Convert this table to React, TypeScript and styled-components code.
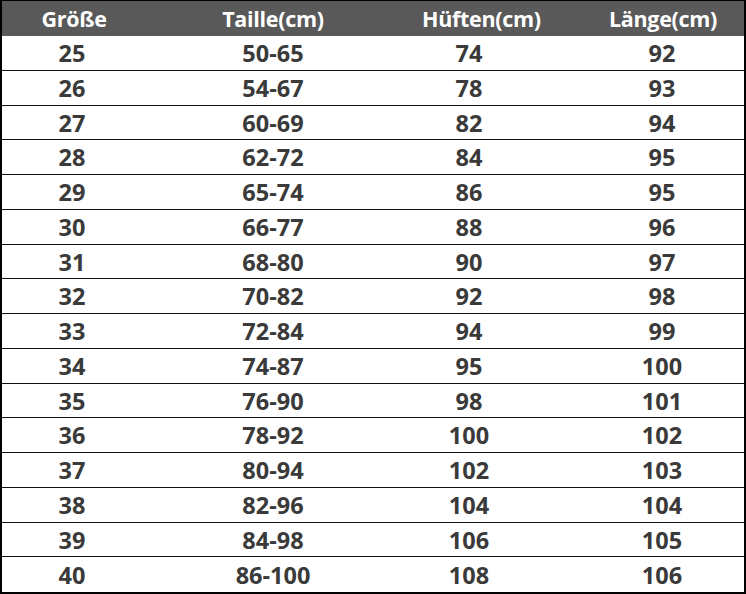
import React from 'react';
import styled, { createGlobalStyle } from 'styled-components';

const GlobalStyle = createGlobalStyle`
  html, body {
    margin: 0;
    padding: 0;
    background: #ffffff;
  }
  body {
    font-family: "Open Sans", "Noto Sans", "DejaVu Sans", sans-serif;
  }
`;

const Table = styled.div`
  width: 746px;
  box-sizing: border-box;
  border: 2px solid #000;
  border-top-width: 1px;
  display: flex;
  flex-direction: column;
`;

const Row = styled.div<{ head?: boolean }>`
  display: grid;
  grid-template-columns: 140px 262px 136px 1fr;
  align-items: center;
  box-sizing: border-box;
  height: ${({ head }) => (head ? '35px' : '34.75px')};
  padding-top: ${({ head }) => (head ? '0' : '2px')};
  background: ${({ head }) => (head ? '#595959' : '#fff')};
  border-bottom: ${({ head }) => (head ? 'none' : '1.5px solid #111')};
  &:last-child {
    border-bottom: none;
  }
`;

const Cell = styled.div<{ head?: boolean; shift?: number }>`
  text-align: center;
  padding-left: ${({ shift = 0 }) => Math.max(shift, 0)}px;
  padding-right: ${({ shift = 0 }) => Math.max(-shift, 0)}px;
  font-weight: 700;
  font-size: ${({ head }) => (head ? '21.5px' : '23.5px')};
  letter-spacing: ${({ head }) => (head ? '-0.3px' : '0')};
  color: ${({ head }) => (head ? '#ffffff' : '#3a3a3a')};
  line-height: 1;
  white-space: nowrap;
`;

const headers = ['Größe', 'Taille(cm)', 'Hüften(cm)', 'Länge(cm)'];
const headShift = [4, 0, 18, 42];
const bodyShift = [0, 0, -6, 40];

const rows: [string, string, string, string][] = [
  ['25', '50-65', '74', '92'],
  ['26', '54-67', '78', '93'],
  ['27', '60-69', '82', '94'],
  ['28', '62-72', '84', '95'],
  ['29', '65-74', '86', '95'],
  ['30', '66-77', '88', '96'],
  ['31', '68-80', '90', '97'],
  ['32', '70-82', '92', '98'],
  ['33', '72-84', '94', '99'],
  ['34', '74-87', '95', '100'],
  ['35', '76-90', '98', '101'],
  ['36', '78-92', '100', '102'],
  ['37', '80-94', '102', '103'],
  ['38', '82-96', '104', '104'],
  ['39', '84-98', '106', '105'],
  ['40', '86-100', '108', '106'],
];

const App = () => {
  return (
    <>
      <GlobalStyle />
      <Table>
        <Row head>
          {headers.map((h, i) => (
            <Cell head key={h} shift={headShift[i]}>{h}</Cell>
          ))}
        </Row>
        {rows.map((r) => (
          <Row key={r[0]}>
            {r.map((v, i) => (
              <Cell key={i} shift={bodyShift[i]}>{v}</Cell>
            ))}
          </Row>
        ))}
      </Table>
    </>
  );
};

export default App;
